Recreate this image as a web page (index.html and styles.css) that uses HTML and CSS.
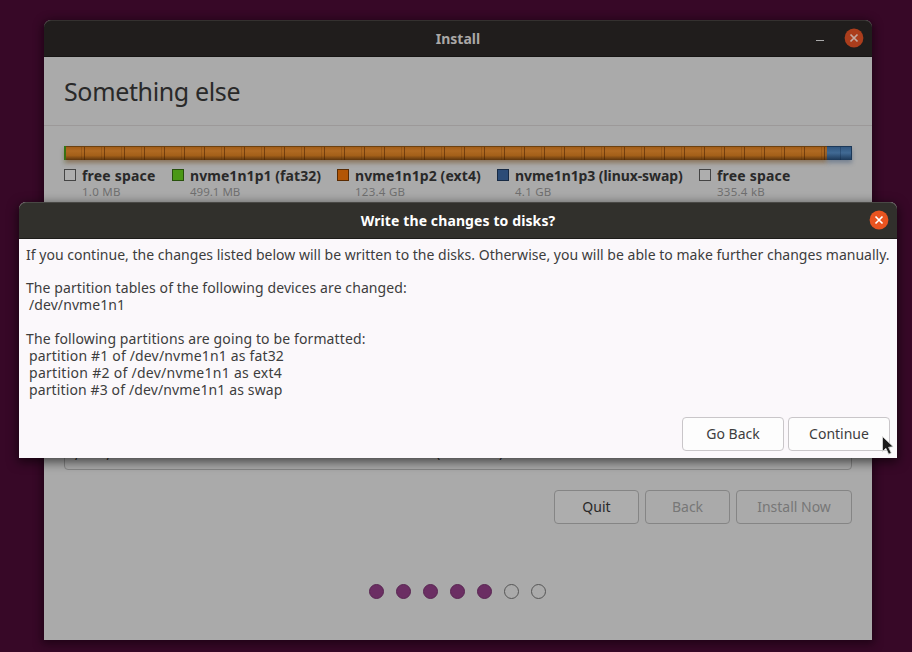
FILE: index.html
```html
<!DOCTYPE html>
<html lang="en">
<head>
<meta charset="utf-8">
<title>Install</title>
<link rel="stylesheet" href="styles.css">
</head>
<body>
<main class="desktop">
  <section class="window installer">
    <header class="titlebar">
      <h1 class="title"><span class="t-install">Install</span></h1>
      <div class="controls">
        <span class="minimize"></span>
        <svg class="close" viewBox="0 0 20 20"><circle cx="10" cy="10" r="9.4"/><path d="M6.5 6.5l7 7M13.5 6.5l-7 7"/></svg>
      </div>
    </header>
    <h2 class="heading"><span class="t-heading">Something else</span></h2>
    <div class="content">
      <div class="disk-bar"><i class="part fat"></i><i class="part ext"></i><i class="part swap"></i></div>
      <ul class="legend">
        <li class="key k1"><i class="swatch"></i><div><b class="t-k1">free space</b><small class="t-s1">1.0 MB</small></div></li>
        <li class="key k2"><i class="swatch green"></i><div><b class="t-k2">nvme1n1p1 (fat32)</b><small class="t-s2">499.1 MB</small></div></li>
        <li class="key k3"><i class="swatch orange"></i><div><b class="t-k3">nvme1n1p2 (ext4)</b><small class="t-s3">123.4 GB</small></div></li>
        <li class="key k4"><i class="swatch blue"></i><div><b class="t-k4">nvme1n1p3 (linux-swap)</b><small class="t-s4">4.1 GB</small></div></li>
        <li class="key k5"><i class="swatch"></i><div><b class="t-k1">free space</b><small class="t-s5">335.4 kB</small></div></li>
      </ul>
      <div class="device"><span class="device-path"><span class="slash">/</span>dev<span class="slash">/</span>nvme1n1</span><span>(128.0 GB)</span></div>
      <div class="actions">
        <button class="btn quit"><span class="t-quit">Quit</span></button>
        <button class="btn back" disabled><span class="t-back">Back</span></button>
        <button class="btn now" disabled><span class="t-now">Install Now</span></button>
      </div>
      <div class="steps"><i class="dot done"></i><i class="dot done"></i><i class="dot done"></i><i class="dot done"></i><i class="dot done"></i><i class="dot"></i><i class="dot"></i></div>
    </div>
  </section>

  <section class="window dialog">
    <header class="titlebar">
      <h1 class="title"><span class="t-dialog">Write the changes to disks?</span></h1>
      <div class="controls">
        <svg class="close" viewBox="0 0 20 20"><circle cx="10" cy="10" r="9.4"/><path d="M6.5 6.5l7 7M13.5 6.5l-7 7"/></svg>
      </div>
    </header>
    <div class="message">
      <p class="t-m1">If you continue, the changes listed below will be written to the disks. Otherwise, you will be able to make further changes manually.</p>
      <p class="gap t-m2">The partition tables of the following devices are changed:</p>
      <p class="item t-m3">/dev/nvme1n1</p>
      <p class="gap-wide t-m4">The following partitions are going to be formatted:</p>
      <p class="item t-m5">partition #1 of /dev/nvme1n1 as fat32</p>
      <p class="item t-m6">partition #2 of /dev/nvme1n1 as ext4</p>
      <p class="item t-m7">partition #3 of /dev/nvme1n1 as swap</p>
    </div>
    <div class="dialog-actions">
      <button class="btn"><span class="t-goback">Go Back</span></button>
      <button class="btn"><span class="t-continue">Continue</span></button>
    </div>
  </section>
  <svg class="pointer" viewBox="0 0 14 22"><path d="M1.500 1.500v15l3.400-3.200 2.800 5.900 2.600-1.200-2.700-5.700 4.600-.6z"/></svg>
</main>
</body>
</html>
```
FILE: styles.css
```css
* { box-sizing: border-box; }
body { margin: 0; font-family: "Noto Sans", sans-serif; font-size: 14px; color: #3d3d3d; }
h1, h2, p, ul { margin: 0; padding: 0; }
.desktop { position: relative; width: 912px; height: 652px; overflow: hidden; background: #370827; }
.window { position: absolute; border-radius: 7px 7px 0 0; }
.installer { left: 44px; top: 20px; width: 828px; height: 620px; background: #aaa; color: #292929; box-shadow: 0 2px 9px 2px rgba(20, 0, 14, .65); }
.dialog { left: 19px; top: 202px; width: 878px; height: 256px; background: #fbf8fb; box-shadow: 0 3px 11px 1px rgba(0, 0, 0, .6); }
.titlebar { position: relative; height: 37px; display: flex; align-items: center; justify-content: center; border-radius: 7px 7px 0 0; background: #201d1c; border-top: 1px solid #34312f; border-bottom: 1px solid #171514; }
.dialog .titlebar { background: #31302c; border-top-color: #494845; border-bottom-color: #1d1c1a; color: #fff; }
.installer .titlebar { color: #aaa8a6; }
.title { font-size: 14px; font-weight: 700; line-height: 20px; }
.controls { position: absolute; right: 8px; top: 7px; display: flex; align-items: center; gap: 20px; }
.minimize { width: 8px; height: 1px; margin-top: 5px; background: #aaa; }
.close { width: 20px; height: 20px; display: block; }
.close circle { fill: #e95420; }
.close path { stroke: #fff; stroke-width: 1.7; fill: none; }
.installer .close circle { fill: #ab3d1c; }
.installer .close path { stroke: #c4aaa1; }
.heading { height: 69px; padding: 16px 20px 0; border-bottom: 1px solid #9c9999; font-size: 25px; line-height: 36px; font-weight: 400; }
.content { padding: 20px 20px 0; }
.disk-bar { display: flex; height: 14px; }
.part { display: block; flex: none; }
.fat { width: 2px; background: #2f7a13; box-shadow: 0 3px 4px rgba(70, 100, 20, .4); }
.ext { width: 761px; border-top: 1px solid #6b4110; background: repeating-linear-gradient(90deg, transparent 0 15px, rgba(70, 30, 0, .2) 15px 16px, transparent 16px 18px, rgba(60, 25, 0, .5) 18px 19px, transparent 19px 20px), linear-gradient(#a35d18, #b06a22 30%, #a46019 65%, #5e360e); box-shadow: 0 3px 4px rgba(110, 68, 20, .5); }
.swap { width: 25px; border-top: 1px solid #1c3858; border-right: 1px solid #1c3858; background: repeating-linear-gradient(90deg, transparent 0 13px, rgba(0, 20, 50, .25) 13px 14px, transparent 14px 17px), linear-gradient(#315780, #416a94 45%, #1c3858); box-shadow: 0 3px 4px rgba(40, 70, 110, .4); }
.legend { display: flex; height: 42px; padding-top: 7px; list-style: none; }
.key { display: flex; gap: 6px; white-space: nowrap; }
.k1, .k2, .k3, .k4 { flex: none; }
.k1 { width: 108px; }
.k2 { width: 165px; }
.k3 { width: 160px; }
.k4 { width: 202px; }
.swatch { width: 12px; height: 12px; margin-top: 2px; border: 1px solid #444; background: #aeaeae; }
.green { background: #4b9816; border-color: #28510c; }
.orange { background: #b35605; border-color: #5a2b02; }
.blue { background: #2c4c77; border-color: #172a44; }
.key b { display: block; font-size: 14px; line-height: 18px; height: 17px; }
.key small { display: block; font-size: 11.5px; line-height: 15px; color: #707070; }
.device { display: flex; height: 34px; margin-top: 234px; padding: 5px 10px 0; border: 1px solid #858585; border-radius: 4px; line-height: 20px; }
.device-path { width: 361px; letter-spacing: .7px; }
.slash { vertical-align: -3px; line-height: 1; }
.actions { display: flex; justify-content: flex-end; gap: 6px; margin-top: 20px; }
.btn { width: 102px; height: 34px; padding: 0; border: 1px solid #c9c6c9; border-radius: 4px; background: #fdfdfd; color: #3d3d3d; font: 14px/20px "Noto Sans", sans-serif; white-space: nowrap; }
.installer .btn { background: #adadad; border-color: #858585; color: #292929; }
.installer .btn:disabled { background: #aaa; color: #777; }
.installer .now { width: 116px; }
.installer .quit, .installer .back { width: 85px; }
.steps { display: flex; justify-content: center; gap: 12px; margin-top: 60px; padding-right: 2px; }
.dot { width: 15px; height: 15px; border: 1px solid #555; border-radius: 50%; }
.done { background: #6b2e63; border-color: #592652; }
.message { padding: 7px 7px 0; height: 178px; line-height: 17px; white-space: nowrap; }
.gap { margin-top: 16px; }
.gap-wide { margin-top: 17px; }
.item { padding-left: 3px; }
.dialog-actions { display: flex; justify-content: flex-end; gap: 4px; padding-right: 7px; }
.pointer { position: absolute; left: 881px; top: 435px; width: 14px; height: 22px; }
.pointer path { fill: #1b1b1b; stroke: #ddd; stroke-width: .8; }

/* Tracking per line */
.t-heading { letter-spacing: -.36px; }
.t-dialog { letter-spacing: .11px; }
.t-k1 { letter-spacing: .2px; }
.t-k2 { letter-spacing: .06px; }
.t-k3 { letter-spacing: .09px; }
.t-k4 { letter-spacing: -.09px; }
.t-s1, .t-s3, .t-s4, .t-s5 { letter-spacing: .25px; }
.t-m1 { letter-spacing: .017px; }
.t-m2 { letter-spacing: .09px; }
.t-m3 { letter-spacing: .08px; }
.t-m4 { letter-spacing: .12px; }
.t-m5 { letter-spacing: .17px; }
.t-m6 { letter-spacing: .28px; }
.t-m7 { letter-spacing: .12px; }
```
